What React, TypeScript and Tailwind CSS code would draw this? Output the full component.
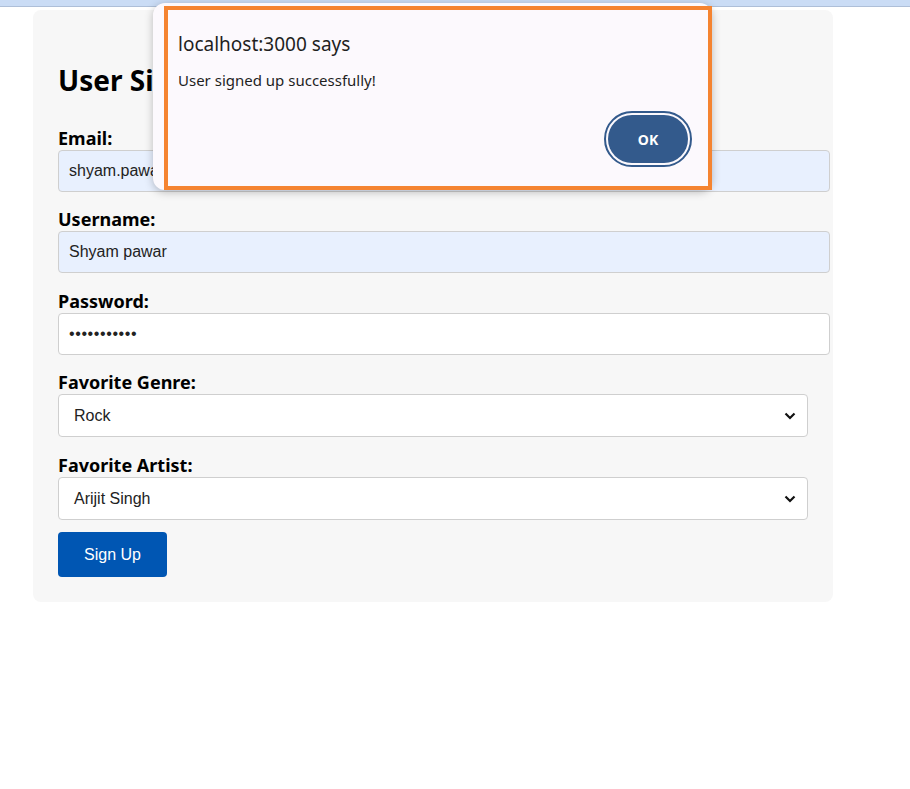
import React from "react";

const labelCls = "block text-[18px] leading-[24px] font-bold text-black";
const inputCls =
  "block w-[772px] h-[42px] px-[10px] border border-[#cfcfcf] rounded-[4px] text-[16px] text-[#222] outline-none";

const Chevron = () => (
  <svg width="12" height="8" viewBox="0 0 12 8" className="absolute right-[5px] top-1/2 -translate-y-1/2">
    <path d="M1.5 1.5 L6 6 L10.5 1.5" fill="none" stroke="#111" strokeWidth="2.2" />
  </svg>
);

function Select({ value }: { value: string }) {
  return (
    <div className="relative w-[750px] h-[43px] bg-white border border-[#cfcfcf] rounded-[4px] flex items-center pl-[15px] text-[16px] text-[#222]">
      {value}
      <div className="absolute right-[6px] top-0 h-full w-[14px]">
        <Chevron />
      </div>
    </div>
  );
}

export default function App() {
  return (
    <div className="relative w-[910px] h-[789px] bg-white overflow-hidden" style={{ fontFamily: "'Noto Sans', sans-serif" }}>
      <div className="h-[7px] bg-[#cadcf5] border-b border-[#aebfd8]" />

      <div className="ml-[33px] mt-[3px] w-[800px] bg-[#f7f7f7] rounded-[8px] px-[25px] pt-[50px] pb-[25px]">
        <h2 className="text-[28px] leading-[40px] font-bold text-black mb-[26px]">User Signup</h2>

        <div className="mb-[15px]">
          <label className={labelCls}>Email:</label>
          <div className={`${inputCls} bg-[#e8f0fe] flex items-center`} style={{ fontFamily: "'Liberation Sans', Arial, sans-serif" }}>
            shyam.pawar@gmail.com
          </div>
        </div>

        <div className="mb-[16px]">
          <label className={labelCls}>Username:</label>
          <div className={`${inputCls} bg-[#e8f0fe] flex items-center`} style={{ fontFamily: "'Liberation Sans', Arial, sans-serif" }}>
            Shyam pawar
          </div>
        </div>

        <div className="mb-[15px]">
          <label className={labelCls}>Password:</label>
          <div className={`${inputCls} bg-white flex items-center text-[14px] tracking-[0.6px]`} style={{ fontFamily: "'Liberation Sans', Arial, sans-serif" }}>
            •••••••••••
          </div>
        </div>

        <div className="mb-[16px]" style={{ fontFamily: "'Liberation Sans', Arial, sans-serif" }}>
          <label className={labelCls} style={{ fontFamily: "'Noto Sans', sans-serif" }}>Favorite Genre:</label>
          <Select value="Rock" />
        </div>

        <div className="mb-[12px]" style={{ fontFamily: "'Liberation Sans', Arial, sans-serif" }}>
          <label className={labelCls} style={{ fontFamily: "'Noto Sans', sans-serif" }}>Favorite Artist:</label>
          <Select value="Arijit Singh" />
        </div>

        <button
          className="w-[109px] h-[45px] bg-[#0056b3] text-white text-[16px] rounded-[4px]"
          style={{ fontFamily: "'Liberation Sans', Arial, sans-serif" }}
        >
          Sign Up
        </button>
      </div>

      {/* alert dialog */}
      <div className="absolute left-[153px] top-[3px] w-[559px] h-[187px] bg-[#fcf9fd] rounded-[12px] shadow-[0_2px_8px_rgba(0,0,0,0.25)]">
        <div className="absolute left-[11px] top-[3px] w-[548px] h-[184px] border-[4px] border-[#f58431] px-[10px] pt-[21px]">
          <div className="text-[19px] leading-[26px] text-[#1f1f1f]">localhost:3000 says</div>
          <div className="mt-[13px] text-[15px] leading-[20px] text-[#1f1f1f]">User signed up successfully!</div>
          <div className="absolute right-[16px] top-[101px] w-[88px] h-[56px] rounded-full border-[2px] border-[#335a8c] p-[2px]">
            <div className="w-full h-full rounded-full bg-[#335a8c] flex items-center justify-center text-white text-[14px] font-bold">
              OK
            </div>
          </div>
        </div>
      </div>
    </div>
  );
}
